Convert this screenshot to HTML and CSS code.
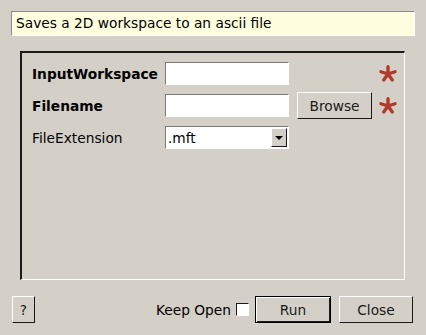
FILE: index.html
```html
<!DOCTYPE html>
<html lang="en">
<head>
    <meta charset="UTF-8">
    <title>SaveAscii</title>
    <link rel="stylesheet" href="styles.css">
</head>
<body>
    <div class="dialog">
        <div class="description">Saves a 2D workspace to an ascii file</div>

        <div class="group">
            <div class="props">
                <label class="prop-label bold">InputWorkspace</label>
                <input class="field" type="text">
                <span></span>
                <svg class="star" viewBox="0 0 16 16"><path d="M8 1.5V8M8 8L1.8 6M8 8L14.2 6M8 8L4.2 13.3M8 8L11.8 13.3"/></svg>

                <label class="prop-label bold">Filename</label>
                <input class="field" type="text">
                <button class="btn browse">Browse</button>
                <svg class="star" viewBox="0 0 16 16"><path d="M8 1.5V8M8 8L1.8 6M8 8L14.2 6M8 8L4.2 13.3M8 8L11.8 13.3"/></svg>

                <label class="prop-label">FileExtension</label>
                <div class="combo">
                    <span class="combo-text">.mft</span>
                    <span class="combo-arrow"><svg viewBox="0 0 8 4" width="8" height="4"><path d="M0 0H8L4 4Z"/></svg></span>
                </div>
            </div>
        </div>

        <div class="footer">
            <button class="btn help">?</button>
            <div class="spacer"></div>
            <label class="keep-open">Keep Open <span class="check"></span></label>
            <button class="btn default">Run</button>
            <button class="btn close">Close</button>
        </div>
    </div>
</body>
</html>
```

FILE: styles.css
```css
body {
    margin: 0;
    background: #d4d0c8;
    font-family: "DejaVu Sans", sans-serif;
    font-size: 13.75px;
    color: #000;
}
.dialog {
    width: 426px;
    height: 335px;
    padding: 11px 0 0;
    box-sizing: border-box;
    display: flex;
    flex-direction: column;
}
.description {
    margin: 0 11px;
    height: 25px;
    box-sizing: border-box;
    padding: 0 4px;
    line-height: 23px;
    background: #ffffe0;
    border: 1px solid;
    border-color: #8a8a8a #ffffff #ffffff #8a8a8a;
}
.group {
    margin: 15px 21px 0 20px;
    height: 229px;
    box-sizing: border-box;
    border-style: solid;
    border-width: 2px 1px 1px 2px;
    border-color: #1a1a1a #ffffff #ffffff #1a1a1a;
    padding: 9px 0 0 10px;
}
.props {
    display: grid;
    grid-template-columns: 133px 124px 8px 75px 7px 18px;
    grid-template-rows: 23px 27px 23px;
    row-gap: 7px;
    align-items: center;
}
.props > .field,
.props > .combo {
    grid-column: 2;
}
.props > .browse {
    grid-column: 4;
}
.props > .star {
    grid-column: 6;
}
.prop-label {
    grid-column: 1;
    white-space: nowrap;
}
.bold {
    font-weight: bold;
}
.field {
    width: 124px;
    height: 23px;
    box-sizing: border-box;
    margin: 0;
    padding: 0 2px;
    background: #fff;
    border: 1px solid;
    border-color: #7a7a7a #ffffff #ffffff #7a7a7a;
    outline: none;
    font: inherit;
}
.star {
    width: 18px;
    height: 18px;
    fill: none;
    stroke: #b13a2c;
    stroke-width: 3;
    stroke-linecap: round;
}
.combo {
    width: 124px;
    height: 23px;
    box-sizing: border-box;
    background: #fff;
    border: 1px solid;
    border-color: #7a7a7a #ffffff #ffffff #7a7a7a;
    display: flex;
    align-items: center;
    justify-content: space-between;
    padding: 1px;
}
.combo-text {
    padding-left: 1px;
}
.combo-arrow {
    width: 16px;
    height: 19px;
    box-sizing: border-box;
    background: #d4d0c8;
    border: 1px solid;
    border-color: #ffffff #1a1a1a #1a1a1a #ffffff;
    display: flex;
    align-items: center;
    justify-content: center;
}
.btn {
    margin: 0;
    height: 27px;
    box-sizing: border-box;
    background: #d4d0c8;
    border: 1px solid;
    border-color: #ffffff #1a1a1a #1a1a1a #ffffff;
    font: inherit;
    color: #1a1a1a;
    padding: 0;
}
.browse {
    width: 75px;
}
.footer {
    margin-top: 16px;
    padding: 0 13px 0 12px;
    display: flex;
    align-items: center;
}
.help {
    width: 23px;
}
.spacer {
    flex: 1;
}
.keep-open {
    display: flex;
    align-items: center;
    gap: 5px;
    margin-right: 6px;
}
.check {
    width: 13px;
    height: 13px;
    box-sizing: border-box;
    background: #fff;
    border: 1px solid;
    border-color: #1a1a1a #ffffff #ffffff #1a1a1a;
}
.default {
    width: 76px;
    border: 1px solid #000;
    box-shadow: inset 1px 1px #ffffff, inset -1px -1px #1a1a1a;
    margin-right: 8px;
}
.close {
    width: 74px;
}
```
